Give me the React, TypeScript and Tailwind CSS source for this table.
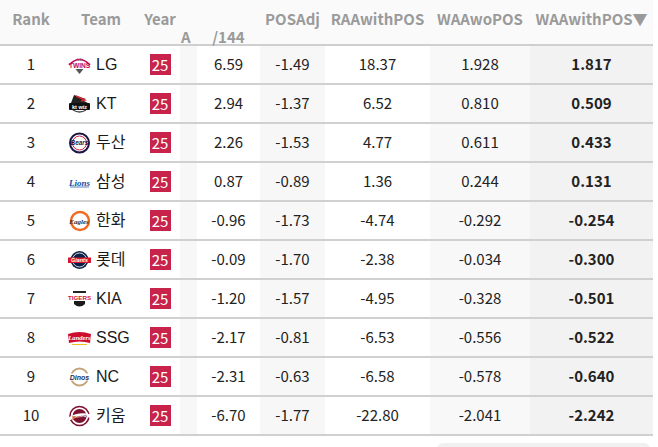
const teams = [
  { rank: 1, name: "LG", logo: "lg", a: "6.59", pos: "-1.49", raa: "18.37", wo: "1.928", w: "1.817" },
  { rank: 2, name: "KT", logo: "kt", a: "2.94", pos: "-1.37", raa: "6.52", wo: "0.810", w: "0.509" },
  { rank: 3, name: "두산", logo: "doosan", a: "2.26", pos: "-1.53", raa: "4.77", wo: "0.611", w: "0.433" },
  { rank: 4, name: "삼성", logo: "samsung", a: "0.87", pos: "-0.89", raa: "1.36", wo: "0.244", w: "0.131" },
  { rank: 5, name: "한화", logo: "hanwha", a: "-0.96", pos: "-1.73", raa: "-4.74", wo: "-0.292", w: "-0.254" },
  { rank: 6, name: "롯데", logo: "lotte", a: "-0.09", pos: "-1.70", raa: "-2.38", wo: "-0.034", w: "-0.300" },
  { rank: 7, name: "KIA", logo: "kia", a: "-1.20", pos: "-1.57", raa: "-4.95", wo: "-0.328", w: "-0.501" },
  { rank: 8, name: "SSG", logo: "ssg", a: "-2.17", pos: "-0.81", raa: "-6.53", wo: "-0.556", w: "-0.522" },
  { rank: 9, name: "NC", logo: "nc", a: "-2.31", pos: "-0.63", raa: "-6.58", wo: "-0.578", w: "-0.640" },
  { rank: 10, name: "키움", logo: "kiwoom", a: "-6.70", pos: "-1.77", raa: "-22.80", wo: "-2.041", w: "-2.242" },
];

const sans = "font-['Liberation_Sans',sans-serif]";
const serif = "font-['Liberation_Serif',serif]";

function Logo({ id }: { id: string }) {
  switch (id) {
    case "lg":
      return (
        <svg width="27" height="22" viewBox="0 0 27 22">
          <path d="M3 11 Q13.5 0 24 11" fill="none" stroke="#c30452" strokeWidth="1.6" />
          <text x="13.5" y="6.5" textAnchor="middle" fontSize="3.5" fontWeight="700" fill="#777" className={sans}>LG</text>
          <text x="13.5" y="13.5" textAnchor="middle" fontSize="6.6" fontWeight="700" fill="#c30452" className={sans}>TWINS</text>
          <path d="M9.5 15 H17.5 L13.5 20 Z" fill="#555" />
        </svg>
      );
    case "kt":
      return (
        <svg width="27" height="22" viewBox="0 0 27 22">
          <path d="M8 2 L20 6 L16 7 L22 10 L5 10 Z" fill="#222" />
          <path d="M10 3 L19 7 L15 8" fill="none" stroke="#e0262d" strokeWidth="1.4" />
          <rect x="3" y="10" width="21" height="7" rx="1" fill="#111" />
          <text x="13.5" y="15.6" textAnchor="middle" fontSize="5.6" fontWeight="700" fill="#fff" className={sans}>kt wiz</text>
          <path d="M7 17 Q13.5 21 20 17" fill="none" stroke="#444" strokeWidth="1.4" />
        </svg>
      );
    case "doosan":
      return (
        <svg width="27" height="22" viewBox="0 0 27 22">
          <circle cx="13.5" cy="11" r="9.5" fill="#fff" stroke="#1a1748" strokeWidth="2" />
          <circle cx="13.5" cy="11" r="7" fill="none" stroke="#d0213f" strokeWidth="1" />
          <text x="13.5" y="13.3" textAnchor="middle" fontSize="6.4" fontWeight="700" fontStyle="italic" fill="#1a1748" className={sans}>Bears</text>
        </svg>
      );
    case "samsung":
      return (
        <svg width="27" height="22" viewBox="0 0 27 22">
          <text x="13.5" y="14.5" textAnchor="middle" fontSize="9" fontWeight="700" fontStyle="italic" fill="#0a4ea3" className={serif}>Lions</text>
          <path d="M4 16 H23" stroke="#0a4ea3" strokeWidth="0.7" />
        </svg>
      );
    case "hanwha":
      return (
        <svg width="27" height="22" viewBox="0 0 27 22">
          <circle cx="14" cy="11" r="9" fill="#fff" stroke="#f06a21" strokeWidth="2.4" />
          <text x="13" y="13.5" textAnchor="middle" fontSize="7" fontWeight="700" fontStyle="italic" fill="#2b2b2b" className={serif}>Eagles</text>
        </svg>
      );
    case "lotte":
      return (
        <svg width="27" height="22" viewBox="0 0 27 22">
          <circle cx="13.5" cy="11" r="9" fill="#0c2147" />
          <circle cx="13.5" cy="11" r="7" fill="none" stroke="#fff" strokeWidth="0.8" />
          <rect x="2" y="8.5" width="23" height="5.5" fill="#d6162e" />
          <text x="13.5" y="13.2" textAnchor="middle" fontSize="5.4" fontWeight="700" fontStyle="italic" fill="#fff" className={sans}>Giants</text>
        </svg>
      );
    case "kia":
      return (
        <svg width="27" height="22" viewBox="0 0 27 22">
          <path d="M7 3 H20 V5 H7 Z" fill="#222" />
          <text x="13.5" y="11.5" textAnchor="middle" fontSize="6.2" fontWeight="700" fill="#d5172e" className={sans}>TIGERS</text>
          <path d="M8 13 H19 V16 Q13.5 21 8 16 Z" fill="#1b1b1b" />
        </svg>
      );
    case "ssg":
      return (
        <svg width="27" height="22" viewBox="0 0 27 22">
          <path d="M2 7 Q13.5 3 25 7 L24 16 Q13.5 13 3 16 Z" fill="#ce0e2d" />
          <text x="13.5" y="13" textAnchor="middle" fontSize="6.6" fontWeight="700" fontStyle="italic" fill="#fff" className={serif}>Landers</text>
          <path d="M6 17.5 H21" stroke="#f2b705" strokeWidth="0.9" />
        </svg>
      );
    case "nc":
      return (
        <svg width="27" height="22" viewBox="0 0 27 22">
          <circle cx="13.5" cy="11" r="8.5" fill="none" stroke="#c4a57a" strokeWidth="1.8" />
          <rect x="1" y="7.5" width="25" height="7" fill="#fff" />
          <text x="13.5" y="13.5" textAnchor="middle" fontSize="7" fontWeight="700" fontStyle="italic" fill="#1c2f5a" className={sans}>Dinos</text>
        </svg>
      );
    default:
      return (
        <svg width="27" height="22" viewBox="0 0 27 22">
          <circle cx="13.5" cy="11" r="9.5" fill="#fff" stroke="#7d1230" strokeWidth="1.6" />
          <circle cx="13.5" cy="11" r="7" fill="#7d1230" />
          <path d="M2 12.5 Q13.5 6 25 9.5 L25 13 Q13.5 10 2 16 Z" fill="#fff" />
          <text x="13.5" y="13.5" textAnchor="middle" fontSize="5.2" fontWeight="700" fontStyle="italic" fill="#7d1230" transform="rotate(-10 13.5 12)" className={serif}>Heroes</text>
        </svg>
      );
  }
}

const cols = "grid grid-cols-[62px_78px_40px_17px_63px_65px_105px_100px_123px]";

export default function App() {
  return (
    <div className="w-[658px] h-[447px] overflow-hidden bg-white text-[#222] font-['Noto_Sans_CJK_KR','Noto_Sans',sans-serif]">
      <div className="w-[653px]">
        {/* Header */}
        <div className={`${cols} h-[46px] bg-[#fafafa] border-b-2 border-[#cfcfcf] text-[15px] font-bold text-[#9a9a9a] leading-[18px]`}>
          <div className="pt-[10px] text-center">Rank</div>
          <div className="pt-[10px] text-center">Team</div>
          <div className="pt-[10px] text-center">Year</div>
          <div className="pt-[28px] pl-[1px]">A</div>
          <div className="pt-[28px] text-center">/144</div>
          <div className="pt-[10px] text-center">POSAdj</div>
          <div className="pt-[10px] text-center">RAAwithPOS</div>
          <div className="pt-[10px] text-center">WAAwoPOS</div>
          <div className="pt-[10px] text-center">WAAwithPOS▼</div>
        </div>

        {/* Rows */}
        {teams.map((t) => (
          <div key={t.rank} className={`${cols} h-[39px] border-b-2 border-[#d0d0d0] text-[15px]`}>
            <div className="flex items-center justify-center">{t.rank}</div>
            <div className="flex items-center gap-[3px] pl-[4px]">
              <Logo id={t.logo} />
              <span className="text-[16px] text-[#1a1a1a] font-['Liberation_Sans','Noto_Sans_CJK_KR',sans-serif]">
                {t.name}
              </span>
            </div>
            <div className="flex items-center justify-center">
              <span className="w-[21px] h-[21px] bg-[#c8234a] text-white text-[15px] leading-[21px] text-center">25</span>
            </div>
            <div className="bg-[#f7f7f7]" />
            <div className="flex items-center justify-center">{t.a}</div>
            <div className="flex items-center justify-center bg-[#f7f7f7]">{t.pos}</div>
            <div className="flex items-center justify-center">{t.raa}</div>
            <div className="flex items-center justify-center bg-[#f8f8f8]">{t.wo}</div>
            <div className="flex items-center justify-center bg-[#f2f2f2] font-bold">{t.w}</div>
          </div>
        ))}
      </div>

      <div className="mt-[7px] ml-[437px] w-[213px] h-[24px] rounded-md bg-[#f0f0f0]" />
    </div>
  );
}
